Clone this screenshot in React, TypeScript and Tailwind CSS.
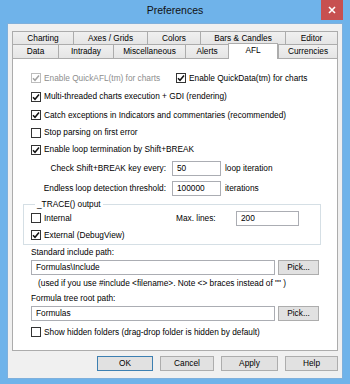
import React from 'react'

const topTabs = [
  { label: 'Charting', w: 'w-[61px]' },
  { label: 'Axes / Grids', w: 'w-[74px]' },
  { label: 'Colors', w: 'w-[53px]' },
  { label: 'Bars & Candles', w: 'w-[85px]' },
  { label: 'Editor', w: 'w-[53px]' },
]

const bottomTabs = [
  { label: 'Data', w: 'w-[46px]' },
  { label: 'Intraday', w: 'w-[55px]' },
  { label: 'Miscellaneous', w: 'w-[72px]' },
  { label: 'Alerts', w: 'w-[43px]' },
  { label: 'AFL', w: 'w-[50px]', active: true },
  { label: 'Currencies', w: 'w-[60px]' },
]

function Check({ checked, disabled }: { checked?: boolean; disabled?: boolean }) {
  return (
    <span className={`flex h-[10px] w-[10px] shrink-0 items-center justify-center border bg-white ${disabled ? 'border-[#bcbcbc]' : 'border-[#333333]'}`}>
      {checked && (
        <svg width="8" height="8" viewBox="0 0 8 8">
          <path d="M1 4.2 L3 6.3 L7 1.5" fill="none" stroke={disabled ? '#a3a3a3' : '#111'} strokeWidth="1.5" />
        </svg>
      )}
    </span>
  )
}

function CheckRow({ label, checked, disabled, className = '' }: { label: string; checked?: boolean; disabled?: boolean; className?: string }) {
  return (
    <div className={`flex items-center gap-[3px] ${className}`}>
      <Check checked={checked} disabled={disabled} />
      <span className={disabled ? 'text-[#8d8d8d]' : 'text-black'}>{label}</span>
    </div>
  )
}

function TextBox({ value, className = '' }: { value: string; className?: string }) {
  return (
    <div className={`flex h-[15px] items-center border border-[#abadb3] bg-white px-[4px] ${className}`}>{value}</div>
  )
}

function Button({ label, primary, className = '' }: { label: string; primary?: boolean; className?: string }) {
  return (
    <div className={`flex h-[15px] items-center justify-center border bg-[#e1e1e1] ${primary ? 'border-[#3c7fb1]' : 'border-[#adadad]'} ${className}`}>
      {label}
    </div>
  )
}

export default function App() {
  return (
    <div className="flex h-[384px] w-[350px] flex-col bg-[#6fb3ea] px-[7px] pb-[5px] font-['Liberation_Sans',Arial,sans-serif] text-[8.3px] text-black">
      {/* title bar */}
      <div className="flex h-[23px] items-start">
        <div className="flex h-[22px] flex-1 items-center justify-center pl-[22px] text-[10.5px] text-[#111]">Preferences</div>
        <div className="flex h-[20px] w-[22px] items-center justify-center bg-[#c75050]">
          <svg width="8" height="8" viewBox="0 0 8 8">
            <path d="M1 1 L7 7 M7 1 L1 7" stroke="#fff" strokeWidth="1.6" />
          </svg>
        </div>
      </div>

      {/* client */}
      <div className="flex flex-1 flex-col border border-[#7fb0dc] bg-[#f0f0f0] px-[4px] pt-[7px]">
        <div className="flex h-[13px]">
          {topTabs.map((t, i) => (
            <div key={t.label} className={`flex items-center justify-center border-t border-l border-[#acacac] bg-gradient-to-b from-[#f0f0f0] to-[#e5e5e5] ${t.w} ${i === topTabs.length - 1 ? 'border-r' : ''}`}>
              {t.label}
            </div>
          ))}
        </div>
        <div className="flex h-[14px] items-end">
          {bottomTabs.map((t, i) =>
            t.active ? (
              <div key={t.label} className={`relative z-10 -mb-px flex h-[16px] items-center justify-center border-x border-t border-[#acacac] bg-white pb-[2px] ${t.w}`}>
                {t.label}
              </div>
            ) : (
              <div key={t.label} className={`flex h-[14px] items-center justify-center border-t border-l border-[#acacac] bg-gradient-to-b from-[#f0f0f0] to-[#e5e5e5] ${t.w} ${i === bottomTabs.length - 1 ? 'border-r' : ''}`}>
                {t.label}
              </div>
            ),
          )}
        </div>

        {/* panel */}
        <div className="flex h-[293px] w-[326px] flex-col border border-[#acacac] bg-white pl-[18px] pt-[10px]">
          <div className="flex h-[18px] items-center">
            <CheckRow label="Enable QuickAFL(tm) for charts" checked disabled className="w-[145px]" />
            <CheckRow label="Enable QuickData(tm) for charts" checked />
          </div>
          <CheckRow label="Multi-threaded charts execution + GDI (rendering)" checked className="h-[19px]" />
          <CheckRow label="Catch exceptions in Indicators and commentaries (recommended)" checked className="h-[18px]" />
          <CheckRow label="Stop parsing on first error" className="h-[17px]" />
          <CheckRow label="Enable loop termination by Shift+BREAK" checked className="h-[17px]" />

          <div className="flex h-[20px] items-center">
            <span className="w-[135px] text-right">Check Shift+BREAK key every:</span>
            <TextBox value="50" className="ml-[6px] w-[49px]" />
            <span className="ml-[4px]">loop iteration</span>
          </div>
          <div className="flex h-[20px] items-center">
            <span className="w-[135px] text-right">Endless loop detection threshold:</span>
            <TextBox value="100000" className="ml-[6px] w-[49px]" />
            <span className="ml-[4px]">iterations</span>
          </div>

          <fieldset className="-ml-[8px] h-[47px] w-[298px] border border-[#d5dfe5] pl-[7px]">
            <legend className="ml-[4px] px-[2px] leading-[12px]">_TRACE() output</legend>
            <div className="flex h-[16px] items-center">
              <CheckRow label="Internal" className="w-[145px]" />
              <span className="w-[60px]">Max. lines:</span>
              <TextBox value="200" className="w-[63px]" />
            </div>
            <CheckRow label="External (DebugView)" checked className="h-[18px]" />
          </fieldset>

          <div className="flex h-[14px] items-center">Standard include path:</div>
          <div className="mt-[1px] flex h-[15px] items-center">
            <TextBox value="Formulas\Include" className="w-[244px]" />
            <Button label="Pick..." className="ml-[3px] w-[41px]" />
          </div>
          <div className="flex h-[16px] items-center pl-[7px]">(used if you use #include &lt;filename&gt;. Note &lt;&gt; braces instead of &quot;&quot; )</div>
          <div className="flex h-[15px] items-center">Formula tree root path:</div>
          <div className="flex h-[15px] items-center">
            <TextBox value="Formulas" className="w-[244px]" />
            <Button label="Pick..." className="ml-[3px] w-[41px]" />
          </div>
          <CheckRow label="Show hidden folders (drag-drop folder is hidden by default)" className="mt-[3px] h-[16px]" />
        </div>

        {/* buttons */}
        <div className="mt-[5px] flex w-[326px] justify-end gap-[7px]">
          <Button label="OK" primary className="w-[56px]" />
          <Button label="Cancel" className="w-[54px]" />
          <Button label="Apply" className="w-[57px]" />
          <Button label="Help" className="w-[53px]" />
        </div>
      </div>
    </div>
  )
}
